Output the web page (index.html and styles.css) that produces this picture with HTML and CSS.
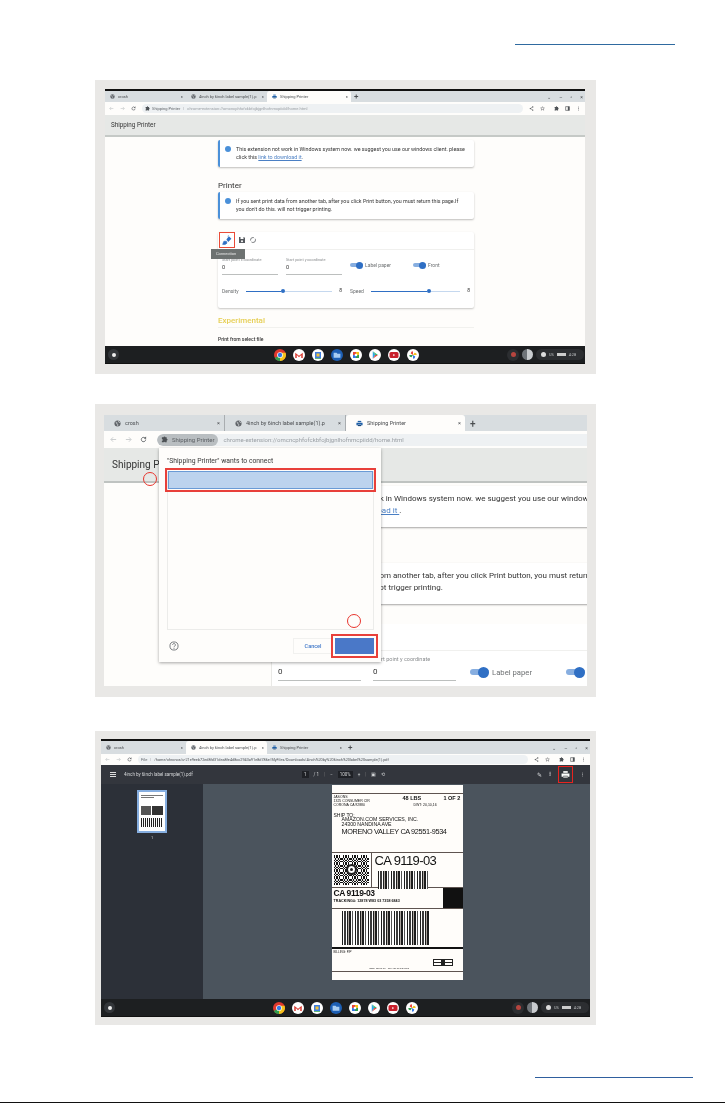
FILE: index.html
```html
<!DOCTYPE html>
<html lang="en">
<head>
    <meta charset="UTF-8">
    <meta name="viewport" content="width=device-width, initial-scale=1.0">
    <title>Shipping Printer - connect and print</title>
    <link rel="stylesheet" href="styles.css">
</head>
<body>
    <svg class="sprites" width="0" height="0">
        <symbol id="i-globe" viewBox="0 0 16 16"><circle cx="8" cy="8" r="7" fill="#5f6368"/><path d="M3 4l4 2-1 3 3 1-1 4M10 2l1 3 3 1" fill="none" stroke="#dfe3e6" stroke-width="1.5"/></symbol>
        <symbol id="i-printer" viewBox="0 0 16 16"><path d="M4 2h8v3H4z" fill="#1d5fa8"/><path d="M1 6h14v6h-3v-2H4v2H1z" fill="#1d5fa8"/><path d="M4 11h8v3H4z" fill="#16467c"/></symbol>
        <symbol id="i-puzzle" viewBox="0 0 16 16"><path d="M6 3a2 2 0 0 1 4 0h3v3a2 2 0 0 1 0 4v4H9a2 2 0 0 0-3 0H2v-3a2 2 0 0 0 0-4V3z" fill="currentColor"/></symbol>
        <symbol id="i-share" viewBox="0 0 16 16"><path d="M12 3L4 8l8 5" fill="none" stroke="currentColor" stroke-width="1.6"/><circle cx="12" cy="3" r="2" fill="currentColor"/><circle cx="4" cy="8" r="2" fill="currentColor"/><circle cx="12" cy="13" r="2" fill="currentColor"/></symbol>
        <symbol id="i-star" viewBox="0 0 16 16"><path d="M8 2l1.8 4 4.2.4-3.2 2.8 1 4.3L8 11.2l-3.8 2.3 1-4.3L2 6.400l4.200-.4z" fill="none" stroke="currentColor" stroke-width="1.400"/></symbol>
        <symbol id="i-panel" viewBox="0 0 16 16"><path d="M2 2h12v12H2z" fill="none" stroke="currentColor" stroke-width="2"/><path d="M9 2h5v12H9z" fill="currentColor"/></symbol>
        <symbol id="i-dots" viewBox="0 0 16 16"><circle cx="8" cy="3" r="1.500" fill="currentColor"/><circle cx="8" cy="8" r="1.500" fill="currentColor"/><circle cx="8" cy="13" r="1.500" fill="currentColor"/></symbol>
        <symbol id="i-reload" viewBox="0 0 16 16"><path d="M13 8a5 5 0 1 1-1.500-3.500" fill="none" stroke="currentColor" stroke-width="1.800"/><path d="M14 1v5H9z" fill="currentColor"/></symbol>
        <symbol id="i-back" viewBox="0 0 16 16"><path d="M14 8H3M7 3L2 8l5 5" fill="none" stroke="currentColor" stroke-width="1.600"/></symbol>
        <symbol id="i-forward" viewBox="0 0 16 16"><path d="M2 8h11M9 3l5 5-5 5" fill="none" stroke="currentColor" stroke-width="1.600"/></symbol>
        <symbol id="i-save" viewBox="0 0 16 16"><path d="M2 2h10l2 2v10H2z" fill="#55595e"/><path d="M5 2h6v4H5z" fill="#fff"/><circle cx="8" cy="10.500" r="2" fill="#fff"/></symbol>
        <symbol id="i-sync" viewBox="0 0 16 16"><circle cx="8" cy="8" r="5" fill="none" stroke="#55595e" stroke-width="1.500" stroke-dasharray="11 3"/></symbol>
        <symbol id="i-connect" viewBox="0 0 16 16"><path d="M7 7l4-5 4 4-5 5z" fill="#2f6fc4"/><path d="M9 2l2-1M1 15l2-5 4 0 1 3-3 2z" fill="#2f6fc4" stroke="#2f6fc4"/></symbol>
        <symbol id="i-help" viewBox="0 0 16 16"><circle cx="8" cy="8" r="6.500" fill="none" stroke="#5f6368" stroke-width="1.300"/><path d="M5.800 6.300a2.200 2.200 0 1 1 3.400 1.800c-.8.500-1.200 1-1.200 2M8 11.200v1.300" fill="none" stroke="#5f6368" stroke-width="1.300"/></symbol>
        <symbol id="i-chrome" viewBox="0 0 16 16"><circle cx="8" cy="8" r="8" fill="#e0382e"/><path d="M8 8L1 12a8 8 0 0 0 7 4l4-1z" fill="#2f9e4f"/><path d="M8 5h7.400A8 8 0 0 1 8 16z" fill="#f5c21b"/><circle cx="8" cy="8" r="3.800" fill="#fff"/><circle cx="8" cy="8" r="2.900" fill="#3578e5"/></symbol>
        <symbol id="i-gmail" viewBox="0 0 16 16"><circle cx="8" cy="8" r="8" fill="#fff"/><path d="M3 12V5l5 4 5-4v7h-2V8L8 11 5 8v4z" fill="#d93a30"/></symbol>
        <symbol id="i-docs" viewBox="0 0 16 16"><circle cx="8" cy="8" r="8" fill="#fff"/><path d="M4 4h8v8H4z" fill="#3f7fe0"/><path d="M6 6h4v4H6z" fill="#f3c33a"/><path d="M4 12h8v1H4z" fill="#2f9e4f"/></symbol>
        <symbol id="i-files" viewBox="0 0 16 16"><circle cx="8" cy="8" r="8" fill="#1d5fb4"/><path d="M3.500 5h4l1 1.200h4v5.300h-9z" fill="#a8cdf2"/></symbol>
        <symbol id="i-meet" viewBox="0 0 16 16"><circle cx="8" cy="8" r="8" fill="#fff"/><path d="M4 4h4v4H4z" fill="#e9473a"/><path d="M8 4h4v4H8z" fill="#f5c21b"/><path d="M4 8h4v4H4z" fill="#3578e5"/><path d="M8 8h4v4H8z" fill="#2f9e4f"/><circle cx="8" cy="8" r="1.800" fill="#fff"/></symbol>
        <symbol id="i-play" viewBox="0 0 16 16"><circle cx="8" cy="8" r="8" fill="#fff"/><path d="M5 3l3.500 5L5 13z" fill="#2fa4e6"/><path d="M5 3l7 5H8.500z" fill="#37b36a"/><path d="M5 13l7-5H8.500z" fill="#e5473a"/></symbol>
        <symbol id="i-video" viewBox="0 0 16 16"><circle cx="8" cy="8" r="8" fill="#fff"/><rect x="2" y="4" width="12" height="8" rx="2" fill="#c9202c"/><path d="M7 6.500l2.500 1.500L7 9.500z" fill="#fff"/></symbol>
        <symbol id="i-photos" viewBox="0 0 16 16"><circle cx="8" cy="8" r="8" fill="#fff"/><path d="M8 8V3a3 3 0 0 0-3 3z" fill="#e9473a"/><path d="M8 8h5a3 3 0 0 0-3-3z" fill="#f5c21b"/><path d="M8 8v5a3 3 0 0 0 3-3z" fill="#3578e5"/><path d="M8 8H3a3 3 0 0 0 3 3z" fill="#2f9e4f"/></symbol>
    </svg>

    <div class="top-rule"></div>

    <!-- Step 1: connection button -->
    <section class="panel panel-one">
        <div class="shot">
            <div class="tabs">
                <div class="tab tab-wide"><svg class="ico"><use href="#i-globe"/></svg><span class="tab-name">crosh</span><span>×</span></div>
                <div class="tab tab-wide"><svg class="ico"><use href="#i-globe"/></svg><span class="tab-name">4inch by 6inch label sample(1).p</span><span>×</span></div>
                <div class="tab tab-active"><svg class="ico"><use href="#i-printer"/></svg><span class="tab-name">Shipping Printer</span><span>×</span></div>
                <span class="tab-plus">+</span>
                <div class="win-btns"><span>⌄</span><span>–</span><span>▫</span><span>×</span></div>
            </div>
            <div class="toolbar">
                <svg class="ico nav-off"><use href="#i-back"/></svg>
                <svg class="ico nav-off"><use href="#i-forward"/></svg>
                <svg class="ico nav-on"><use href="#i-reload"/></svg>
                <div class="omnibox">
                    <svg class="ico nav-on"><use href="#i-puzzle"/></svg>
                    <span class="site">Shipping Printer</span><span class="sep">|</span>
                    <span class="url">chrome-extension://omcncphfofckbfojbjgnlhofnmcpiidd/home.html</span>
                </div>
                <svg class="ico nav-on"><use href="#i-share"/></svg>
                <svg class="ico nav-on"><use href="#i-star"/></svg>
                <svg class="ico nav-on gap-left"><use href="#i-puzzle"/></svg>
                <svg class="ico nav-on"><use href="#i-panel"/></svg>
                <svg class="ico nav-on"><use href="#i-dots"/></svg>
            </div>
            <div class="app-head">Shipping Printer</div>
            <div class="page">
                <div class="page-col">
                    <div class="alert alert-first">
                        <span class="alert-dot"></span>
                        <p>This extension not work in Windows system now. we suggest you use our windows client. please<br>click this <a href="#">link to download it</a>.</p>
                    </div>
                    <h3 class="section-title">Printer</h3>
                    <div class="alert">
                        <span class="alert-dot"></span>
                        <p>If you sent print data from another tab, after you click Print button, you must return this page.If<br>you don't do this. will not trigger printing.</p>
                    </div>
                    <div class="settings">
                        <div class="settings-bar">
                            <div class="connect-btn">
                                <svg class="ico-connect"><use href="#i-connect"/></svg>
                                <span class="tooltip">Connection</span>
                            </div>
                            <svg class="ico-lg"><use href="#i-save"/></svg>
                            <svg class="ico-lg"><use href="#i-sync"/></svg>
                        </div>
                        <div class="settings-row">
                            <div class="field"><label>Start point x coordinate</label><span>0</span></div>
                            <div class="field"><label>Start point y coordinate</label><span>0</span></div>
                            <div class="switch"><i></i>Label paper</div>
                            <div class="switch"><i></i>Front</div>
                        </div>
                        <div class="slider-row">
                            <div class="slider slider-density"><span>Density</span><div class="track"><b></b></div><em>8</em></div>
                            <div class="slider slider-speed"><span>Speed</span><div class="track"><b></b></div><em>8</em></div>
                        </div>
                    </div>
                    <h3 class="exp-title">Experimental</h3>
                    <p class="exp-sub">Print from select file</p>
                </div>
            </div>
            <div class="shelf">
                <span class="launcher"><i></i></span>
                <div class="shelf-apps">
                    <svg><use href="#i-chrome"/></svg><svg><use href="#i-gmail"/></svg><svg><use href="#i-docs"/></svg><svg><use href="#i-files"/></svg><svg><use href="#i-meet"/></svg><svg><use href="#i-play"/></svg><svg><use href="#i-video"/></svg><svg><use href="#i-photos"/></svg>
                </div>
                <div class="tray">
                    <span class="rec"><i></i></span>
                    <span class="avatar"></span>
                    <span class="status"><i></i>US <b></b> 4:28</span>
                </div>
            </div>
        </div>
    </section>

    <!-- Step 2: device chooser -->
    <section class="panel panel-two">
        <div class="shot">
            <div class="tabs">
                <div class="tab tab-wide"><svg class="ico"><use href="#i-globe"/></svg><span class="tab-name">crosh</span><span>×</span></div>
                <div class="tab tab-wide"><svg class="ico"><use href="#i-globe"/></svg><span class="tab-name">4inch by 6inch label sample(1).p</span><span>×</span></div>
                <div class="tab tab-active"><svg class="ico"><use href="#i-printer"/></svg><span class="tab-name">Shipping Printer</span><span>×</span></div>
                <span class="tab-plus">+</span>
            </div>
            <div class="toolbar">
                <svg class="ico nav-off"><use href="#i-back"/></svg>
                <svg class="ico nav-off"><use href="#i-forward"/></svg>
                <svg class="ico nav-on"><use href="#i-reload"/></svg>
                <div class="omnibox">
                    <span class="chip"><svg class="ico nav-on"><use href="#i-puzzle"/></svg>Shipping Printer</span>
                    <span class="url">chrome-extension://omcncphfofckbfojbjgnlhofnmcpiidd/home.html</span>
                </div>
            </div>
            <div class="app-head">Shipping Printer</div>
            <div class="page">
                <div class="page-col">
                    <div class="alert">
                        <span class="alert-dot"></span>
                        <p>This extension not work in Windows system now. we suggest you use our windows client. please<br>click this <a href="#">link to download it </a>.</p>
                    </div>
                    <div class="alert alert-low">
                        <span class="alert-dot"></span>
                        <p>If you sent print data from another tab, after you click Print button, you must return this page.If<br>you don't do this. will not trigger printing.</p>
                    </div>
                    <div class="settings">
                        <div class="settings-bar"></div>
                        <div class="settings-row">
                            <div class="field"><label>Start point x coordinate</label><span>0</span></div>
                            <div class="field"><label>Start point y coordinate</label><span>0</span></div>
                            <div class="switch"><i></i>Label paper</div>
                            <div class="switch"><i></i></div>
                        </div>
                    </div>
                </div>
            </div>
            <div class="chooser">
                <p class="chooser-title">"Shipping Printer" wants to connect</p>
                <div class="device-list"><div class="device-row"></div></div>
                <div class="chooser-foot">
                    <svg class="ico-help"><use href="#i-help"/></svg>
                    <span class="btn-cancel">Cancel</span>
                    <span class="btn-connect"></span>
                </div>
            </div>
            <span class="mark mark-device"></span>
            <span class="mark mark-connect"></span>
        </div>
    </section>

    <!-- Step 3: print from the pdf viewer -->
    <section class="panel panel-three">
        <div class="shot">
            <div class="tabs">
                <div class="tab tab-wide"><svg class="ico"><use href="#i-globe"/></svg><span class="tab-name">crosh</span><span>×</span></div>
                <div class="tab tab-active"><svg class="ico"><use href="#i-globe"/></svg><span class="tab-name">4inch by 6inch label sample(1).p</span><span>×</span></div>
                <div class="tab tab-third"><svg class="ico"><use href="#i-printer"/></svg><span class="tab-name">Shipping Printer</span><span>×</span></div>
                <span class="tab-plus">+</span>
                <div class="win-btns"><span>⌄</span><span>–</span><span>▫</span><span>×</span></div>
            </div>
            <div class="toolbar">
                <svg class="ico nav-off"><use href="#i-back"/></svg>
                <svg class="ico nav-off"><use href="#i-forward"/></svg>
                <svg class="ico nav-on"><use href="#i-reload"/></svg>
                <div class="omnibox">
                    <span class="site">File</span><span class="sep">|</span>
                    <span class="url url-dark">/home/chronos/u-21e9eeb72ed8fd31dea8fe4d8cc2943a91e8d786e/MyFiles/Downloads/4inch%20by%206inch%20label%20sample(1).pdf</span>
                </div>
                <svg class="ico nav-on"><use href="#i-share"/></svg>
                <svg class="ico nav-on"><use href="#i-star"/></svg>
                <svg class="ico nav-on gap-left"><use href="#i-puzzle"/></svg>
                <svg class="ico nav-on"><use href="#i-panel"/></svg>
                <svg class="ico nav-on"><use href="#i-dots"/></svg>
            </div>
            <div class="pdf-bar">
                <span class="burger"></span>
                <span class="pdf-name">4inch by 6inch label sample(1).pdf</span>
                <div class="pdf-zoom"><span class="pdf-box">1</span><span>/ 1</span><span class="pdf-sep">|</span><span>−</span><span class="pdf-box">100%</span><span>+</span><span class="pdf-sep">|</span><span>▣</span><span>⟲</span></div>
                <div class="pdf-actions">
                    <span>✎</span><span>⭳</span>
                    <span class="print-btn"><svg class="ico"><use href="#i-printer"/></svg></span>
                    <svg class="ico"><use href="#i-dots"/></svg>
                </div>
            </div>
            <div class="pdf-body">
                <div class="pdf-side">
                    <div class="thumb"><i class="t-line"></i><i class="t-line t-short"></i><i class="t-mid"></i><i class="t-bar"></i></div>
                    <span class="thumb-no">1</span>
                </div>
                <div class="pdf-main">
                    <div class="label-page">
                        <div class="lb-top"></div>
                        <div class="lb-ship">
                            <div class="lb-from">
                                <p>JASONS<br>1325 CONSUMER CIR<br>CORONA CA 92880</p>
                                <div class="lb-weight"><b>48 LBS</b><small>DWT: 20,10,16</small></div>
                                <b class="lb-count">1 OF 2</b>
                            </div>
                            <p class="lb-to-head">SHIP TO:</p>
                            <p class="lb-to">AMAZON.COM SERVICES, INC.</p>
                            <p class="lb-to">24300 NANDINA AVE</p>
                            <p class="lb-city">MORENO VALLEY CA 92551-9534</p>
                        </div>
                        <div class="lb-route">
                            <div class="qr"><i></i></div>
                            <div class="lb-route-main">
                                <p class="lb-code">CA 9119-03</p>
                                <div class="barcode bar-small"></div>
                            </div>
                        </div>
                        <div class="lb-track">
                            <div class="lb-track-text">
                                <p class="lb-code2">CA 9119-03</p>
                                <p class="lb-tracking">TRACKING#: 12878 W83 03 7358 6843</p>
                            </div>
                            <div class="lb-black"></div>
                        </div>
                        <div class="lb-bar"><div class="barcode bar-big"></div></div>
                        <div class="lb-foot">
                            <p class="lb-bill">BILLING: P/P</p>
                            <div class="lb-stamp"></div>
                            <p class="lb-ref">REF: 88 00 01 &nbsp; INV: 05 00 12 0397</p>
                        </div>
                        <div class="lb-end"></div>
                    </div>
                </div>
            </div>
            <div class="shelf">
                <span class="launcher"><i></i></span>
                <div class="shelf-apps">
                    <svg><use href="#i-chrome"/></svg><svg><use href="#i-gmail"/></svg><svg><use href="#i-docs"/></svg><svg><use href="#i-files"/></svg><svg><use href="#i-meet"/></svg><svg><use href="#i-play"/></svg><svg><use href="#i-video"/></svg><svg><use href="#i-photos"/></svg>
                </div>
                <div class="tray">
                    <span class="rec"><i></i></span>
                    <span class="avatar"></span>
                    <span class="status"><i></i>US <b></b> 4:28</span>
                </div>
            </div>
        </div>
    </section>

    <div class="bottom-rule"></div>
    <div class="page-edge"></div>
</body>
</html>
```

FILE: styles.css
```css
* {
    box-sizing: border-box;
}
html, body {
    margin: 0;
    padding: 0;
}
body {
    width: 725px;
    height: 1103px;
    overflow: hidden;
    background-color: #fff;
    font-family: Roboto, "Liberation Sans", sans-serif;
    color: #2b2b2b;
}
p, h3 {
    margin: 0;
    font-weight: 400;
}
.sprites {
    position: absolute;
}
.top-rule {
    width: 160px;
    height: 1px;
    margin: 44px 0 35px 515px;
    background-color: #2f6aa0;
}
.bottom-rule {
    width: 158px;
    height: 1px;
    margin: 52px 0 24px 535px;
    background-color: #2f5f9e;
}
.page-edge {
    height: 1px;
    background-color: #111;
}

/* Grey frame round each screenshot */
.panel {
    width: 501px;
    margin-left: 95px;
    background-color: #e9e8e6;
}
.panel-one {
    height: 294px;
    padding: 9px 11px 10px 10px;
}
.panel-two {
    height: 293px;
    margin-top: 30px;
    padding: 11px 9px 11px 9px;
}
.panel-three {
    height: 294px;
    margin-top: 34px;
    padding: 8px 6px 8px 6px;
}
.shot {
    position: relative;
    display: flex;
    flex-direction: column;
    height: 100%;
    overflow: hidden;
    background-color: #fefdfb;
    filter: blur(0.4px);
}
.panel-one .shot, .panel-three .shot {
    border-top: 2px solid #111;
}

/* Tab strip */
.tabs {
    display: flex;
    align-items: center;
    height: 11px;
    flex-shrink: 0;
    background-color: #d8dde0;
    font-size: 4px;
    color: #4a4d50;
}
.tab {
    display: flex;
    align-items: center;
    gap: 3px;
    height: 100%;
    padding: 0 3px 0 5px;
}
.tab-wide {
    width: 81px;
}
.tab-active {
    width: 84px;
    background-color: #fefdfb;
    border-radius: 3px 3px 0 0;
}
.tab-third {
    width: 84px;
}
.tab-name {
    flex: 1;
    overflow: hidden;
    white-space: nowrap;
}
.tab-plus {
    margin-left: 3px;
    font-size: 8px;
    font-weight: 500;
}
.win-btns {
    display: flex;
    gap: 8px;
    margin-left: auto;
    padding-right: 2px;
    font-size: 5px;
}
.ico {
    width: 5px;
    height: 5px;
    flex-shrink: 0;
}
.nav-off {
    color: #b6babd;
}
.nav-on {
    color: #4d5155;
}

/* Browser toolbar */
.toolbar {
    display: flex;
    align-items: center;
    gap: 6px;
    height: 13px;
    flex-shrink: 0;
    padding: 0 4px;
    background-color: #fefdfb;
    font-size: 4px;
}
.omnibox {
    display: flex;
    align-items: center;
    flex: 1;
    gap: 2px;
    height: 9px;
    padding: 0 3px;
    border-radius: 5px;
    background-color: #eef1f3;
    white-space: nowrap;
    overflow: hidden;
}
.site {
    color: #5f6368;
}
.sep {
    color: #9a9da0;
    margin: 0 1px;
}
.url {
    color: #9ba0a5;
}
.url-dark {
    color: #4c5054;
    font-size: 3.8px;
}
.gap-left {
    margin-left: 3px;
}
.app-head {
    display: flex;
    align-items: center;
    height: 22px;
    flex-shrink: 0;
    padding-left: 6px;
    background-color: #e6e8e6;
    border-bottom: 2px solid #c5c9c6;
    font-size: 6.300px;
    color: #333;
}

/* Extension page */
.page {
    flex: 1;
    overflow: hidden;
}
.page-col {
    width: 256px;
    margin-left: 113px;
}
.alert {
    display: flex;
    gap: 4px;
    height: 27px;
    padding: 5px 4px 0 5px;
    border-left: 2px solid #4a90d9;
    border-radius: 2px;
    background-color: #fff;
    box-shadow: 0 1px 2px rgba(0, 0, 0, 0.25);
    font-size: 5.350px;
    line-height: 8px;
    color: #333;
    white-space: nowrap;
}
.alert-first {
    margin-top: 3px;
}
.alert-dot {
    flex-shrink: 0;
    width: 6px;
    height: 6px;
    margin: 1px 1px 0 0;
    border-radius: 50%;
    background-color: #4a90d9;
}
.alert a {
    color: #4a7fc4;
}
.section-title {
    margin: 13px 0 1px;
    font-size: 8px;
    line-height: 11px;
    color: #333;
}
.settings {
    height: 76px;
    margin-top: 13px;
    border-radius: 2px;
    background-color: #fff;
    box-shadow: 0 1px 2px rgba(0, 0, 0, 0.22);
}
.settings-bar {
    display: flex;
    align-items: center;
    gap: 3px;
    height: 18px;
    padding: 0 1px 1px;
    border-bottom: 1px solid #f0f0ee;
}
.connect-btn {
    position: relative;
    display: flex;
    align-items: center;
    justify-content: center;
    width: 16px;
    height: 16px;
    border: 1px solid #ea4b38;
}
.ico-lg {
    width: 8px;
    height: 8px;
}
.ico-connect {
    width: 10px;
    height: 10px;
}
.tooltip {
    position: absolute;
    top: 16px;
    left: -9px;
    width: 34px;
    height: 10px;
    padding-left: 5px;
    background-color: #6d7271;
    color: #e8e8e8;
    font-size: 4px;
    line-height: 10px;
}
.settings-row {
    display: flex;
    align-items: flex-start;
    gap: 8px;
    padding: 5px 4px 0;
}
.field {
    display: flex;
    flex-direction: column;
    width: 56px;
    height: 20px;
    border-bottom: 1px solid #bcbfbe;
    color: #8a8d8f;
    font-size: 3.800px;
}
.field label {
    height: 8px;
    line-height: 9px;
    white-space: nowrap;
}
.field span {
    font-size: 5.500px;
    line-height: 8px;
    color: #333;
}
.switch {
    display: flex;
    align-items: center;
    gap: 2px;
    height: 8px;
    margin-top: 6px;
    font-size: 5px;
    color: #6d7072;
}
.switch + .switch {
    margin-left: 14px;
}
.switch i {
    position: relative;
    width: 13px;
    height: 4px;
    border-radius: 2px;
    background-color: #87aee0;
}
.switch i::after {
    content: "";
    position: absolute;
    top: -1.500px;
    right: 0;
    width: 7px;
    height: 7px;
    border-radius: 50%;
    background-color: #2f6fc4;
}
.slider-row {
    display: flex;
    margin-top: 13px;
    padding: 0 4px;
    gap: 8px;
}
.slider {
    display: flex;
    align-items: center;
    gap: 7px;
    font-size: 5px;
    color: #6d7072;
}
.slider-density {
    width: 120px;
}
.slider-speed {
    width: 120px;
}
.slider span {
    width: 17px;
}
.slider-speed span {
    width: 14px;
}
.slider em {
    font-style: normal;
    margin-top: -3px;
    color: #333;
}
.track {
    position: relative;
    flex: 1;
    height: 1px;
    background: linear-gradient(90deg, #2f6fc4 41%, #c5d8ef 41%);
}
.slider-speed .track {
    background: linear-gradient(90deg, #2f6fc4 63%, #c5d8ef 63%);
}
.track b {
    position: absolute;
    top: -1.500px;
    left: 41%;
    width: 4px;
    height: 4px;
    border-radius: 50%;
    background-color: #2f6fc4;
}
.slider-speed .track b {
    left: 63%;
}
.exp-title {
    margin-top: 7px;
    padding-bottom: 1px;
    border-bottom: 1px solid #f1f1ee;
    font-size: 8px;
    line-height: 11px;
    font-weight: 500;
    color: #e6cf55;
}
.exp-sub {
    margin-top: 8px;
    font-size: 5px;
    font-weight: 500;
    color: #333;
}

/* Chromebook shelf */
.shelf {
    display: flex;
    align-items: center;
    height: 18px;
    flex-shrink: 0;
    padding: 0 1px 0 3px;
    background-color: #1d1f21;
    border-bottom: 1px solid #111;
}
.launcher {
    display: flex;
    align-items: center;
    justify-content: center;
    width: 11px;
    height: 11px;
    border-radius: 50%;
    background-color: #33363a;
}
.launcher i {
    width: 4px;
    height: 4px;
    border-radius: 50%;
    background-color: #eee;
}
.shelf-apps {
    display: flex;
    gap: 7px;
    margin-left: 155px;
}
.panel-three .shelf-apps {
    margin-left: 158px;
}
.shelf-apps svg {
    width: 12px;
    height: 12px;
}
.tray {
    display: flex;
    align-items: center;
    gap: 3px;
    margin-left: auto;
}
.rec {
    display: flex;
    align-items: center;
    justify-content: center;
    width: 12px;
    height: 12px;
    border-radius: 50%;
    background-color: #2c2e31;
}
.rec i {
    width: 5px;
    height: 5px;
    border-radius: 50%;
    background-color: #b7453f;
}
.avatar {
    width: 11px;
    height: 11px;
    border-radius: 50%;
    background: linear-gradient(90deg, #6f7479 50%, #c9cccf 50%);
}
.status {
    display: flex;
    align-items: center;
    gap: 3px;
    width: 48px;
    height: 11px;
    padding: 0 5px;
    border-radius: 6px;
    background-color: #2c2e31;
    color: #c4c6c8;
    font-size: 3.800px;
}
.status i {
    width: 5px;
    height: 5px;
    border-radius: 50%;
    background-color: #ddd;
}
.status b {
    width: 9px;
    height: 3px;
    background-color: #ccc;
}

/* Second shot is a zoomed crop of the same page */
.panel-two .tabs {
    height: 16px;
    font-size: 5.500px;
}
.panel-two .tab {
    gap: 4px;
    padding: 0 4px 0 10px;
}
.panel-two .tab-wide {
    width: 121px;
    border-right: 1px solid #a9adb0;
}
.panel-two .tab-active {
    width: 119px;
}
.panel-two .tab-plus {
    margin-left: 5px;
    font-size: 10px;
}
.panel-two .ico {
    width: 7px;
    height: 7px;
}
.panel-two .toolbar {
    height: 17px;
    gap: 8px;
    padding: 0 0 0 6px;
    font-size: 6px;
}
.panel-two .omnibox {
    height: 12px;
    padding: 0;
    gap: 5px;
    margin-left: 2px;
    border-radius: 6px 0 0 6px;
}
.chip {
    display: flex;
    align-items: center;
    gap: 4px;
    height: 12px;
    padding: 0 4px;
    border-radius: 6px;
    background-color: #b9bec1;
    color: #5a5e62;
}
.panel-two .app-head {
    height: 35px;
    padding-left: 8px;
    border-bottom: 2px solid #bfc3c1;
    font-size: 10px;
}
.panel-two .page-col {
    width: 392px;
    margin-left: 168px;
}
.panel-two .alert {
    height: 41px;
    gap: 7px;
    margin-top: 3px;
    padding: 7px 6px 0 8px;
    font-size: 8px;
    line-height: 12px;
    box-shadow: 0 1px 2px rgba(0, 0, 0, 0.35);
}
.panel-two .alert-low {
    margin-top: 36px;
}
.panel-two .alert-dot {
    width: 9px;
    height: 9px;
}
.panel-two .settings {
    height: 120px;
    margin-top: 20px;
    box-shadow: -1px 0 0 #e9e9e6;
}
.panel-two .settings-bar {
    height: 27px;
}
.panel-two .settings-row {
    gap: 12px;
    padding: 3px 6px 0;
}
.panel-two .field {
    width: 83px;
    height: 27px;
    font-size: 5.500px;
}
.panel-two .field label {
    height: 12px;
    line-height: 10px;
}
.panel-two .field span {
    font-size: 8px;
    line-height: 12px;
}
.panel-two .switch {
    gap: 3px;
    height: 12px;
    margin-top: 12px;
    margin-left: 2px;
    font-size: 7.700px;
    flex-shrink: 0;
}
.panel-two .switch + .switch {
    margin-left: 22px;
}
.panel-two .switch i {
    width: 19px;
    height: 6px;
    border-radius: 3px;
}
.panel-two .switch i::after {
    top: -2.500px;
    width: 11px;
    height: 11px;
}

/* Device chooser, lies over the page */
.chooser {
    position: absolute;
    top: 33px;
    left: 55px;
    display: flex;
    flex-direction: column;
    width: 222px;
    height: 214px;
    padding: 9px 7px 0 8px;
    background-color: #fefdfb;
    box-shadow: 0 1px 3px rgba(0, 0, 0, 0.35);
}
.chooser-title {
    height: 14px;
    font-size: 6.800px;
    line-height: 8px;
    color: #3a3a3a;
}
.device-list {
    height: 159px;
    border: 1px solid #ececea;
    border-top: 0;
}
.device-row {
    height: 18px;
    background-color: #bcd3ee;
    border: 1px solid #6a9bd6;
    outline: 2px solid #e8403a;
    outline-offset: 1px;
}
.chooser-foot {
    display: flex;
    align-items: center;
    flex: 1;
    padding-left: 2px;
}
.ico-help {
    width: 10px;
    height: 10px;
}
.btn-cancel {
    width: 40px;
    height: 16px;
    margin-left: auto;
    border: 1px solid #f1f1ef;
    font-size: 5.500px;
    font-weight: 500;
    line-height: 14px;
    text-align: center;
    color: #3f78c9;
}
.btn-connect {
    width: 39px;
    height: 16px;
    margin: 0 0 0 2px;
    background-color: #4a78c8;
    outline: 2px solid #e8403a;
    outline-offset: 2px;
}
.mark {
    position: absolute;
    width: 14px;
    height: 14px;
    border: 1px solid #e8352e;
    border-radius: 50%;
}
.mark-device {
    top: 57px;
    left: 39px;
}
.mark-connect {
    top: 199px;
    left: 243px;
}

/* Pdf viewer */
.panel-three .tabs {
    height: 13px;
}
.panel-three .tab-wide {
    width: 85px;
}
.panel-three .tab-active {
    width: 81px;
}
.panel-three .tab-third {
    width: 78px;
}
.panel-three .toolbar {
    height: 11px;
}
.pdf-bar {
    display: flex;
    align-items: center;
    height: 19px;
    flex-shrink: 0;
    padding: 0 5px 0 9px;
    background-color: #33363d;
    color: #d5d7d9;
    font-size: 4.500px;
}
.burger {
    width: 6px;
    height: 5px;
    border-top: 1px solid #ddd;
    border-bottom: 1px solid #ddd;
    background: linear-gradient(#ddd, #ddd) center / 100% 1px no-repeat;
}
.pdf-name {
    margin-left: 8px;
    width: 178px;
}
.pdf-zoom {
    display: flex;
    align-items: center;
    gap: 5px;
}
.pdf-box {
    padding: 1px 2px;
    background-color: #1f2126;
}
.pdf-sep {
    color: #777;
}
.pdf-actions {
    display: flex;
    align-items: center;
    gap: 7px;
    margin-left: auto;
    font-size: 6px;
}
.print-btn {
    display: flex;
    align-items: center;
    justify-content: center;
    width: 15px;
    height: 17px;
    border: 1px solid #e8241f;
}
.print-btn .ico {
    width: 9px;
    height: 9px;
    color: #eee;
    filter: grayscale(1) brightness(3);
}
.pdf-body {
    display: flex;
    flex: 1;
    min-height: 0;
}
.pdf-side {
    display: flex;
    flex-direction: column;
    align-items: center;
    width: 102px;
    padding-top: 6px;
    background-color: #2c3038;
}
.thumb {
    display: flex;
    flex-direction: column;
    gap: 1px;
    width: 30px;
    height: 43px;
    padding: 3px 2px;
    border: 2px solid #86aee0;
    background-color: #fff;
}
.t-line {
    height: 1px;
    background-color: #777;
}
.t-short {
    width: 60%;
    margin-bottom: 7px;
}
.t-mid {
    height: 9px;
    background: linear-gradient(90deg, #555 45%, #fff 45%, #fff 50%, #333 50%);
}
.t-bar {
    height: 9px;
    margin-top: 2px;
    background: repeating-linear-gradient(90deg, #222 0 1px, #fff 1px 2px);
}
.thumb-no {
    margin-top: 2px;
    font-size: 4px;
    color: #c8cacc;
}
.pdf-main {
    display: flex;
    justify-content: center;
    flex: 1;
    padding: 1px 0 0 10px;
    background-color: #4b545d;
}

/* Shipping label */
.label-page {
    display: flex;
    flex-direction: column;
    width: 131px;
    height: 195px;
    margin-right: 9px;
    background-color: #fffdfa;
    font-family: "Liberation Sans", Arial, sans-serif;
    color: #111;
}
.lb-top {
    height: 9px;
    border-bottom: 1px solid #5e5450;
}
.lb-ship {
    height: 59px;
    padding: 1px 2px;
    border-bottom: 1px solid #5e5450;
}
.lb-from {
    display: flex;
    height: 18px;
    font-size: 3.500px;
    line-height: 4px;
}
.lb-from p {
    width: 69px;
}
.lb-weight {
    display: flex;
    flex-direction: column;
    width: 41px;
    font-size: 5.500px;
    line-height: 6px;
    font-weight: 700;
}
.lb-weight small {
    margin: 1px 0 0 11px;
    font-size: 3.500px;
    font-weight: 400;
}
.lb-count {
    font-size: 5.500px;
    line-height: 6px;
}
.lb-to-head {
    font-size: 5px;
    line-height: 4px;
}
.lb-to {
    margin-left: 8px;
    font-size: 5.200px;
    line-height: 5px;
    white-space: nowrap;
}
.lb-city {
    margin: 1px 0 0 8px;
    font-size: 7.300px;
    line-height: 8px;
    letter-spacing: -0.35px;
    white-space: nowrap;
}
.lb-route {
    display: flex;
    height: 35px;
    border-bottom: 1px solid #5e5450;
}
.qr {
    position: relative;
    width: 40px;
    margin-right: 0;
    border-right: 1px solid #5e5450;
    background-color: #fff;
    background-image:
        repeating-linear-gradient(90deg, #111 0 1px, #fff 1px 2px, #111 2px 4px, #fff 4px 5px, #111 5px 6px, #fff 6px 9px),
        repeating-linear-gradient(0deg, #fff 0 2px, #111 2px 3px, #fff 3px 4px, #111 4px 6px, #fff 6px 7px);
    background-blend-mode: difference;
    background-size: calc(100% - 4px) calc(100% - 4px);
    background-position: 2px 2px;
    background-repeat: no-repeat;
}
.qr i {
    position: absolute;
    top: 11px;
    left: 14px;
    width: 11px;
    height: 11px;
    border-radius: 50%;
    border: 2px solid #222;
    background-color: #fff;
    box-shadow: inset 0 0 0 2px #fff, inset 0 0 0 6px #222;
}
.lb-route-main {
    flex: 1;
    padding: 1px 0 0 3px;
}
.lb-code {
    font-size: 13px;
    line-height: 14px;
    letter-spacing: -0.6px;
}
.barcode {
    background-image: repeating-linear-gradient(90deg, #1d1d1d 0 1px, #fff 1px 2px, #3a3a3a 2px 4px, #fff 4px 5px, #1d1d1d 5px 6px, #a9a39d 6px 7px, #1d1d1d 7px 9px, #fff 9px 10px, #555 10px 11px, #fff 11px 13px);
}
.bar-small {
    width: 50px;
    height: 18px;
    margin: 3px 0 0 3px;
}
.lb-track {
    display: flex;
    height: 21px;
    border-bottom: 1px solid #5e5450;
}
.lb-track-text {
    flex: 1;
    padding: 1px 0 0 2px;
}
.lb-code2 {
    font-size: 8.500px;
    line-height: 9px;
    font-weight: 700;
    letter-spacing: -0.4px;
}
.lb-tracking {
    margin-top: 1px;
    font-size: 3.700px;
    font-weight: 700;
}
.lb-black {
    width: 20px;
    background-color: #111;
}
.lb-bar {
    height: 40px;
    padding: 2px 0 0 10px;
    border-bottom: 2px solid #111;
}
.bar-big {
    width: 88px;
    height: 34px;
}
.lb-foot {
    position: relative;
    height: 23px;
    padding: 1px 2px;
    border-bottom: 1px solid #5e5450;
}
.lb-bill {
    font-size: 3px;
}
.lb-stamp {
    width: 20px;
    height: 7px;
    margin: 5px 0 0 99px;
    border: 1px solid #222;
    background: linear-gradient(#222, #222) center / 4px 100% no-repeat, linear-gradient(#222, #222) center / 100% 1px no-repeat;
}
.lb-ref {
    margin: 1px 0 0 36px;
    font-size: 2.500px;
    white-space: nowrap;
}
.lb-end {
    flex: 1;
}
```
